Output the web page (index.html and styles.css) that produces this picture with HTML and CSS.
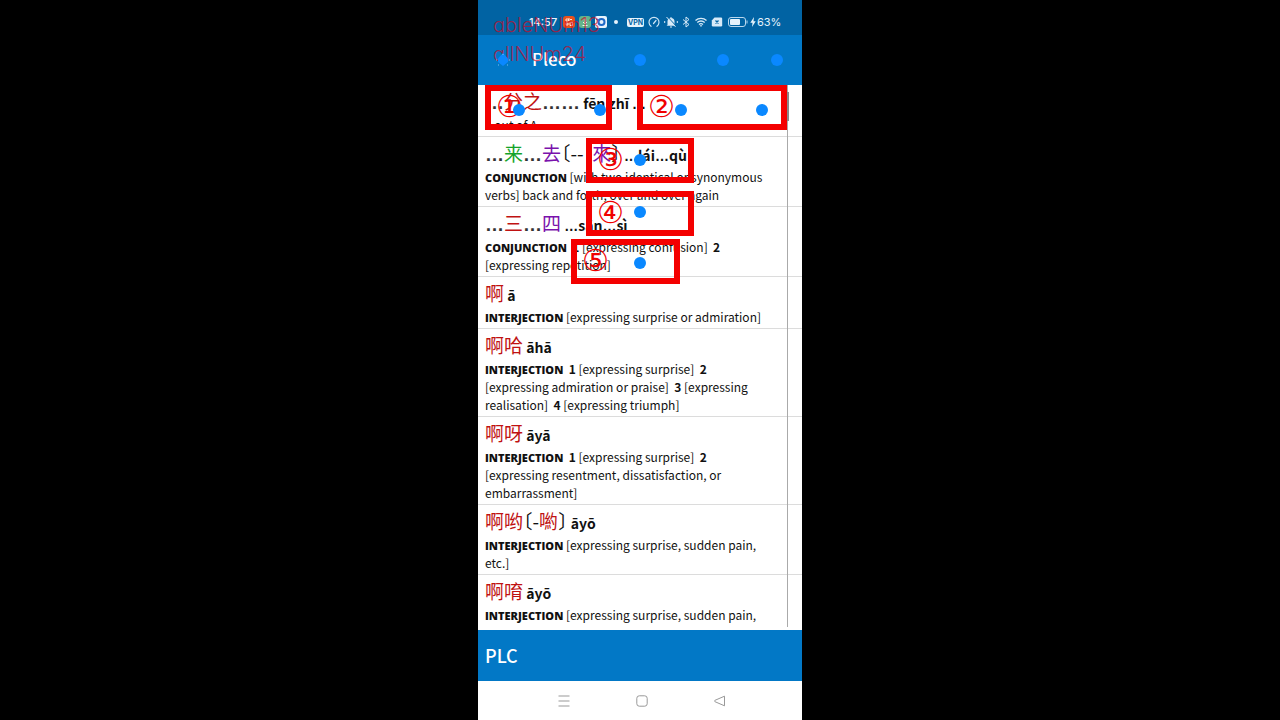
FILE: index.html
```html
<!DOCTYPE html>
<html lang="zh-Hans">
<head>
<meta charset="utf-8">
<title>Pleco</title>
<meta name="viewport" content="width=device-width, initial-scale=1">
<link rel="stylesheet" href="styles.css">
</head>
<body>
<main class="phone">
  <header class="status">
    <span class="clock">14:57</span>
    <svg class="app" viewBox="0 0 12 12"><rect width="12" height="12" rx="3" fill="#e8501c"/><path d="M3 3h2.500v2H3zM7 3.500h2M3 7h2v2H3zM7 6.500h2.500v3H7zM6 2v3" fill="none" stroke="#ffe3d2"/></svg>
    <svg class="app" viewBox="0 0 12 12"><rect width="12" height="12" rx="3" fill="#62b58d"/><path d="M6 2.500v5M4 6l2 2 2-2M3.500 9.500h5" fill="none" stroke="#e5fff0"/></svg>
    <svg class="app" viewBox="0 0 12 12"><rect width="12" height="12" rx="2" fill="#e6f2fc"/><circle cx="6.500" cy="6" r="3" fill="none" stroke="#1d68c7" stroke-width="2"/><path d="M1.500 3l2 1.500" stroke="#1d68c7" stroke-width="1.500"/></svg>
    <span class="bullet"></span>
    <span class="vpn">VPN</span>
    <svg class="sys" viewBox="0 0 12 12"><path d="M3 10.300A5 5 0 1 1 9 10.300M5.500 7.500L8 4.500" fill="none" stroke="#cfe6f6" stroke-width="1.200" stroke-linecap="round"/></svg>
    <svg class="sys bell" viewBox="0 0 14 12"><path d="M3.500 9V5.500a3.500 3.500 0 0 1 7 0V9l1 .8h-9zM6 10.500h2v1H6zM6.500 1h1v1h-1z" fill="#d7eaf8"/><path d="M3.500 .8l9 9.500" stroke="#0163a3"/><path d="M2.500 1l9 9.800M.7 5v2M13.300 5v2" stroke="#d7eaf8"/></svg>
    <svg class="sys blue" viewBox="0 0 8 12"><path d="M1 3.500l6 5L4 11V1l3 2.500-6 5" fill="none" stroke="#d7eaf8"/></svg>
    <svg class="sys" viewBox="0 0 12 12"><path d="M.5 4.500a8 8 0 0 1 11 0M2.300 6.500a5.300 5.300 0 0 1 7.400 0M4 8.500a3 3 0 0 1 4 0" fill="none" stroke="#d7eaf8" stroke-width="1.300"/><path d="M4.700 9.300h2.600L6 11z" fill="#d7eaf8"/></svg>
    <svg class="sys sim" viewBox="0 0 12 12"><path d="M3.500 1.500H10a1.200 1.200 0 0 1 1.200 1.200v6.600A1.200 1.200 0 0 1 10 10.500H2A1.200 1.200 0 0 1 .8 9.300V4.500z" fill="#d7eaf8"/><path d="M4.500 4.500l3 3M7.500 4.500l-3 3" stroke="#0163a3" stroke-width="1.300"/></svg>
    <svg class="battery" viewBox="0 0 20 12"><rect x=".5" y="1.500" width="17" height="9" rx="2.500" fill="none" stroke="#b9d8ee"/><rect x="2" y="3" width="10" height="6" rx="1" fill="#e6f3fc"/><path d="M19 4.500v3" stroke="#b9d8ee"/></svg>
    <svg class="bolt" viewBox="0 0 6 12"><path d="M4 1L.3 6.800h2.200L2 11l3.700-5.800H3.500z" fill="#e6f3fc"/></svg>
    <span class="percent">63%</span>
  </header>
  <div class="toolbar"><h1>Pleco</h1></div>

  <section class="results">
    <ul class="list">
      <li class="entry"><h2><span class="hz"><i>…</i><b class="t1">分之</b><i>……</i></span> fēn zhī <i>…</i></h2><p>1 out of A</p></li>
      <li class="entry"><h2><span class="hz"><i>…</i><b class="t2">来</b><i>…</i><b class="t4">去</b>〔--&nbsp; <b class="t4">來</b>〕</span> <i>…</i>lái<i>…</i>qù</h2><p><span class="pos">CONJUNCTION</span> [with two identical or synonymous verbs] back and forth, over and over again</p></li>
      <li class="entry"><h2><span class="hz"><i>…</i><b class="t1">三</b><i>…</i><b class="t4">四</b></span> <i>…</i>sān<i>…</i>sì</h2><p><span class="pos">CONJUNCTION</span> &nbsp;<b>1</b> [expressing confusion] &nbsp;<b>2</b> [expressing repetition]</p></li>
      <li class="entry"><h2><span class="hz"><b class="t1">啊</b></span> ā</h2><p><span class="pos">INTERJECTION</span> [expressing surprise or admiration]</p></li>
      <li class="entry"><h2><span class="hz"><b class="t1">啊哈</b></span> āhā</h2><p><span class="pos">INTERJECTION</span> &nbsp;<b>1</b> [expressing surprise] &nbsp;<b>2</b> [expressing admiration or praise] &nbsp;<b>3</b> [expressing realisation] &nbsp;<b>4</b> [expressing triumph]</p></li>
      <li class="entry"><h2><span class="hz"><b class="t1">啊呀</b></span> āyā</h2><p><span class="pos">INTERJECTION</span> &nbsp;<b>1</b> [expressing surprise] &nbsp;<b>2</b> [expressing resentment, dissatisfaction, or embarrassment]</p></li>
      <li class="entry"><h2><span class="hz"><b class="t1">啊哟</b>〔-<b class="t1">喲</b>〕</span> āyō</h2><p><span class="pos">INTERJECTION</span> [expressing surprise, sudden pain, etc.]</p></li>
      <li class="entry"><h2><span class="hz"><b class="t1">啊唷</b></span> āyō</h2><p><span class="pos">INTERJECTION</span> [expressing surprise, sudden pain,</p></li>
    </ul>
    <div class="track"><div class="thumb"></div></div>
  </section>

  <footer class="dict">PLC</footer>
  <nav class="nav">
    <button aria-label="Recent apps"><svg viewBox="0 0 12 12"><path d="M.5 1h11M.5 6h11M.5 11h11"/></svg></button>
    <button aria-label="Home"><svg viewBox="0 0 12 12"><rect x=".8" y=".8" width="10.400" height="10.400" rx="2.500"/></svg></button>
    <button aria-label="Back"><svg viewBox="0 0 12 12"><path d="M10.500 1.200v9.600L1 6.700a.8.800 0 0 1 0-1.400z"/></svg></button>
  </nav>

  <div class="overlay">
    <div class="note n1">ableNUm13</div>
    <div class="note n2">allNUm24</div>
    <div class="box b1">①</div>
    <div class="box b2">②</div>
    <div class="box b3">③</div>
    <div class="box b4">④</div>
    <div class="box b5">⑤</div>
    <svg class="back" viewBox="0 0 16 14"><path d="M8 0l5 5.500V9l-5 4-5-4V5.500z" fill="#0a88ff"/><path d="M1 7h1M14 7h1M8 1v1M3 12h1M12 12h1" stroke="#7cc0f5"/></svg>
    <span class="dot d1"></span><span class="dot d2"></span><span class="dot d3"></span>
    <span class="dot d4"></span><span class="dot d5"></span><span class="dot d6"></span><span class="dot d7"></span>
    <span class="dot d8"></span><span class="dot d9"></span><span class="dot d10"></span>
  </div>
</main>
</body>
</html>
```
FILE: styles.css
```css
* { box-sizing: border-box; }
body {
  margin: 0;
  background: #000;
  font-family: "Noto Sans CJK SC", "Noto Sans", sans-serif;
  color: #111;
}
.phone {
  position: relative;
  display: flex;
  flex-direction: column;
  width: 45vh;
  height: 100vh;
  margin: 0 auto;
  overflow: hidden;
  background: #fff;
}
.status {
  display: flex;
  align-items: center;
  flex: none;
  height: 35px;
  padding: 9px 0 0 51px;
  background: #0163a3;
  color: #e6f3fc;
  font-family: Inter, sans-serif;
  font-size: 11px;
}
.status > * { flex: none; }
.status svg { height: 12px; }
.app { width: 12px; margin-right: 4px; }
.clock { width: 34px; font-weight: 500; }
.bullet { width: 4px; height: 4px; margin: 0 9px 0 3px; border-radius: 50%; background: #e6f3fc; }
.vpn {
  width: 17px;
  margin-right: 4px;
  border-radius: 2px;
  background: #e6f3fc;
  color: #0163a3;
  font-size: 7px;
  font-weight: 700;
  line-height: 9px;
  text-align: center;
}
.sys { width: 12px; margin-right: 4px; }
.bell { width: 14px; }
.blue { width: 8px; margin-right: 5px; }
.sim { margin-right: 5px; }
.battery { width: 20px; margin-right: 2px; }
.bolt { width: 6px; margin-right: 1px; }
.toolbar {
  flex: none;
  height: 50px;
  padding: 12px 0 0 54px;
  background: #0278c6;
  color: #fff;
}
.toolbar h1 { margin: 0; font-size: 17px; font-weight: 500; line-height: 24px; }
.results { flex: 1; min-height: 0; position: relative; overflow: hidden; }
.list { margin: 0; padding: 0; list-style: none; }
.entry { padding: 0 32px 2px 7px; border-bottom: 1px solid #dcdcdc; }
.entry:last-child { border-bottom: 0; }
.entry h2 { margin: 0; height: 31px; font-size: 14px; font-weight: 700; line-height: 32px; white-space: nowrap; }
.entry i { font-family: "Liberation Sans", sans-serif; font-style: normal; }
.hz { font-size: 19px; font-weight: 400; font-feature-settings: "halt"; }
.hz i { font-weight: 700; color: #333; }
.hz b { font-weight: 400; }
.t1 { color: #c01212; }
.t2 { color: #14a32a; }
.t4 { color: #7a12ac; }
.entry p { margin: 0; font-size: 12px; line-height: 18px; }
.pos { font-family: "Open Sans", sans-serif; font-size: 11px; font-weight: 800; line-height: 1; }
.track { position: absolute; top: 0; bottom: 3px; right: 14px; width: 1px; background: #aaa; }
.thumb { width: 2px; height: 29px; margin-top: 7px; background: #888; }
.dict {
  flex: none;
  height: 51px;
  padding-left: 7px;
  background: #0278c6;
  color: #fff;
  font-size: 18px;
  font-weight: 500;
  line-height: 50px;
}
.nav { display: flex; align-items: center; flex: none; height: 39px; padding: 0 70px 0 74px; justify-content: space-between; }
.nav button { display: flex; padding: 5px 6px; border: 0; background: none; }
.nav svg { width: 12px; height: 12px; fill: none; stroke: #999; }
.overlay { position: absolute; inset: 0; pointer-events: none; }
.overlay > * { position: absolute; }
.note {
  left: 15px;
  color: rgba(205, 10, 40, 0.7);
  font-family: Inter, sans-serif;
  font-feature-settings: "cv11";
  font-size: 20px;
  font-weight: 300;
  line-height: 24px;
}
.n1 { top: 13px; }
.n2 { top: 42px; }
.box {
  width: 108px;
  height: 45px;
  padding-left: 5px;
  border: 6px solid #f40000;
  color: #f00000;
  font-family: "DejaVu Sans", sans-serif;
  font-size: 30px;
  line-height: 31px;
}
.b1 { left: 7px; top: 85px; width: 127px; }
.b2 { left: 159px; top: 85px; width: 150px; }
.b3 { left: 108px; top: 138px; }
.b4 { left: 108px; top: 191px; }
.b5 { left: 93px; top: 239px; width: 109px; }
.dot { width: 12px; height: 12px; border-radius: 50%; background: #0a88ff; }
.back { left: 17px; top: 53px; width: 16px; height: 14px; }
.d1 { left: 156px; top: 54px; }
.d2 { left: 239px; top: 54px; }
.d3 { left: 293px; top: 54px; }
.d4 { left: 35px; top: 104px; }
.d5 { left: 116px; top: 104px; }
.d6 { left: 197px; top: 104px; }
.d7 { left: 278px; top: 104px; }
.d8 { left: 156px; top: 154px; }
.d9 { left: 156px; top: 206px; }
.d10 { left: 156px; top: 257px; }
```
